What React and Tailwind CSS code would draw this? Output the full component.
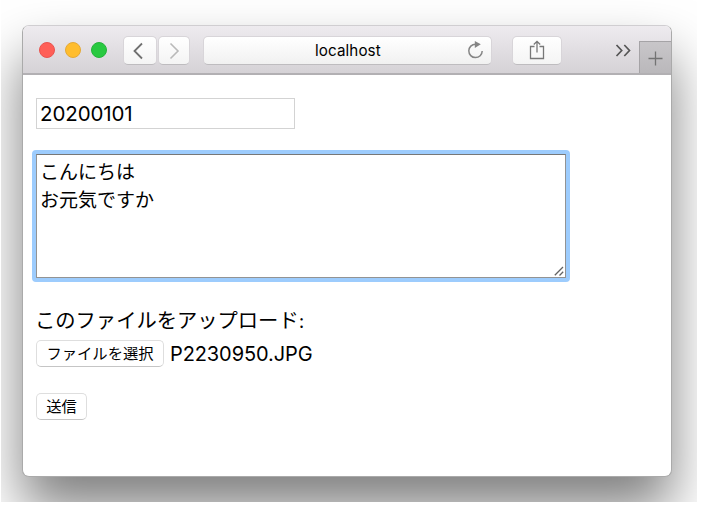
const sans = "font-[Inter,'Noto_Sans_CJK_JP',sans-serif]";

function Toolbar() {
  return (
    <header className="flex h-[49px] shrink-0 items-start border-b-2 border-[#b2b0b3] bg-linear-to-b from-[#eeebef] to-[#d5d2d6] pl-[16px]">
      <div className="mt-[16px] flex gap-[10px]">
        <span className="size-4 rounded-full border border-[#e9544f] bg-[#ff5f57]" />
        <span className="size-4 rounded-full border border-[#e5a935] bg-[#ffbd2e]" />
        <span className="size-4 rounded-full border border-[#25b33a] bg-[#28c940]" />
      </div>
      <div className="mt-[10px] ml-[16px] flex gap-px">
        <button className="flex h-[29px] w-[33.5px] items-center justify-center rounded-[5px] border border-[#d8d5d9] border-b-[#bebcbf] bg-linear-to-b from-white to-[#f4f4f4]">
          <svg className="-ml-[3px]" width="12" height="18" viewBox="0 0 12 18" fill="none" stroke="#707070" strokeWidth="1.8"><path d="M10 1.500 2.500 9l7.500 7.500" /></svg>
        </button>
        <button className="flex h-[29px] w-[32.5px] items-center justify-center rounded-[5px] border border-[#d8d5d9] border-b-[#bebcbf] bg-linear-to-b from-white to-[#f4f4f4]">
          <svg width="12" height="18" viewBox="0 0 12 18" fill="none" stroke="#b9b9b9" strokeWidth="1.600"><path d="M2.500 1.500 10 9l-7.500 7.500" /></svg>
        </button>
      </div>
      <div className="mt-[10px] ml-[13px] flex h-[29px] w-[289px] items-center rounded-[5px] border border-[#d8d5d9] border-b-[#bebcbf] bg-linear-to-b from-white to-[#f1f1f1] pl-[111px]">
        <span className="w-[66px] pt-px text-[15.200px] leading-5 tracking-[0.1px] whitespace-nowrap text-black">localhost</span>
        <svg className="ml-[86px] -mt-[2px]" width="18" height="20" viewBox="0 0 18 20" fill="none" stroke="#858585" strokeWidth="1.500">
          <path d="M8.500 4.200A6.700 6.700 0 1 0 15.200 11" />
          <path d="M7.800 1v7l6-3.700z" fill="#858585" stroke="none" />
        </svg>
      </div>
      <button className="mt-[10px] ml-[20px] flex h-[29px] w-[50px] items-center justify-center rounded-[5px] border border-[#d8d5d9] border-b-[#bebcbf] bg-linear-to-b from-white to-[#f4f4f4]">
        <svg className="-mt-px" width="16" height="20" viewBox="0 0 16 20" fill="none" stroke="#777" strokeWidth="1.300">
          <path d="M5.500 6.500H1.500V18.500h13V6.500h-4M8 12.500V1.500M4.800 4.500 8 1.300l3.200 3.200" />
        </svg>
      </button>
      <svg className="mt-[18px] ml-[53px]" width="17" height="13" viewBox="0 0 17 13" fill="none" stroke="#555" strokeWidth="1.700"><path d="m1.500 1 5.200 5.500L1.500 12M9.300 1l5.200 5.500L9.300 12" /></svg>
      <div className="mt-[15px] ml-auto flex h-[32px] w-[32px] items-center justify-center border-t border-l border-[#a5a3a6] bg-linear-to-b from-[#c8c6c9] to-[#bab8bb] pt-px">
        <svg width="15" height="15" viewBox="0 0 15 15" stroke="#737373" strokeWidth="1.300"><path d="M7.500 0.500v14M0.500 7.500h14" /></svg>
      </div>
    </header>
  );
}

export default function App() {
  return (
    <div className="h-[505px] w-[704px] overflow-hidden bg-white pl-px">
      <div className="h-[502px] w-[696px] overflow-hidden pt-[25px] pl-[21px]">
        <main className={`flex h-[452px] w-[650px] flex-col overflow-hidden rounded-[7px] border border-[#aaa] border-t-[#d0ced1] bg-white shadow-[0_32px_54px_rgba(0,0,0,0.5)] ${sans}`}>
          <Toolbar />
          <form className="flex flex-col items-start pt-[23px] pl-[13px] text-black">
            <input defaultValue="20200101" className="h-[31px] w-[259px] border border-[#d3d3d3] px-[3px] text-[20.500px] leading-none tracking-[-0.1px] outline-none" />
            <div className="relative mt-[25px] h-[124px] w-[530px] border border-[#939393] border-t-[#777] bg-white">
              <div className="pointer-events-none absolute -inset-[5px] rounded-[4px] border-4 border-[#9dccfd]" />
              <textarea defaultValue={"こんにちは\nお元気ですか"} className="block size-full resize-none overflow-hidden px-[3px] pt-[2px] font-['Noto_Sans_CJK_JP',sans-serif] text-[19px] leading-[28px] outline-none" />
              <svg className="absolute right-px bottom-px" width="10" height="10" viewBox="0 0 10 10" stroke="#626262" strokeWidth="1.300"><path d="M.8 9.200 9 1M5.500 9.500 9.200 5.800" /></svg>
            </div>
            <label className="mt-[29px] -ml-px h-[28px] font-['Liberation_Serif','Noto_Sans_CJK_JP',serif] text-[20.3px] leading-[28px] font-normal whitespace-nowrap">このファイルをアップロード:</label>
            <div className="mt-[5px] flex h-[27px] items-center">
              <button type="button" className="h-[27px] w-[128px] rounded-[5px] border border-[#dedede] border-b-[#c5c5c5] bg-white pt-px text-[15.300px] leading-none whitespace-nowrap">ファイルを選択</button>
              <span className="ml-[6px] text-[20px] leading-6 tracking-[-0.1px] whitespace-nowrap">P2230950.JPG</span>
            </div>
            <button type="button" className="mt-[26px] h-[27px] w-[51px] rounded-[5px] border border-[#dedede] border-b-[#c5c5c5] bg-white pt-px text-[15.300px] leading-none">送信</button>
          </form>
        </main>
      </div>
    </div>
  );
}
